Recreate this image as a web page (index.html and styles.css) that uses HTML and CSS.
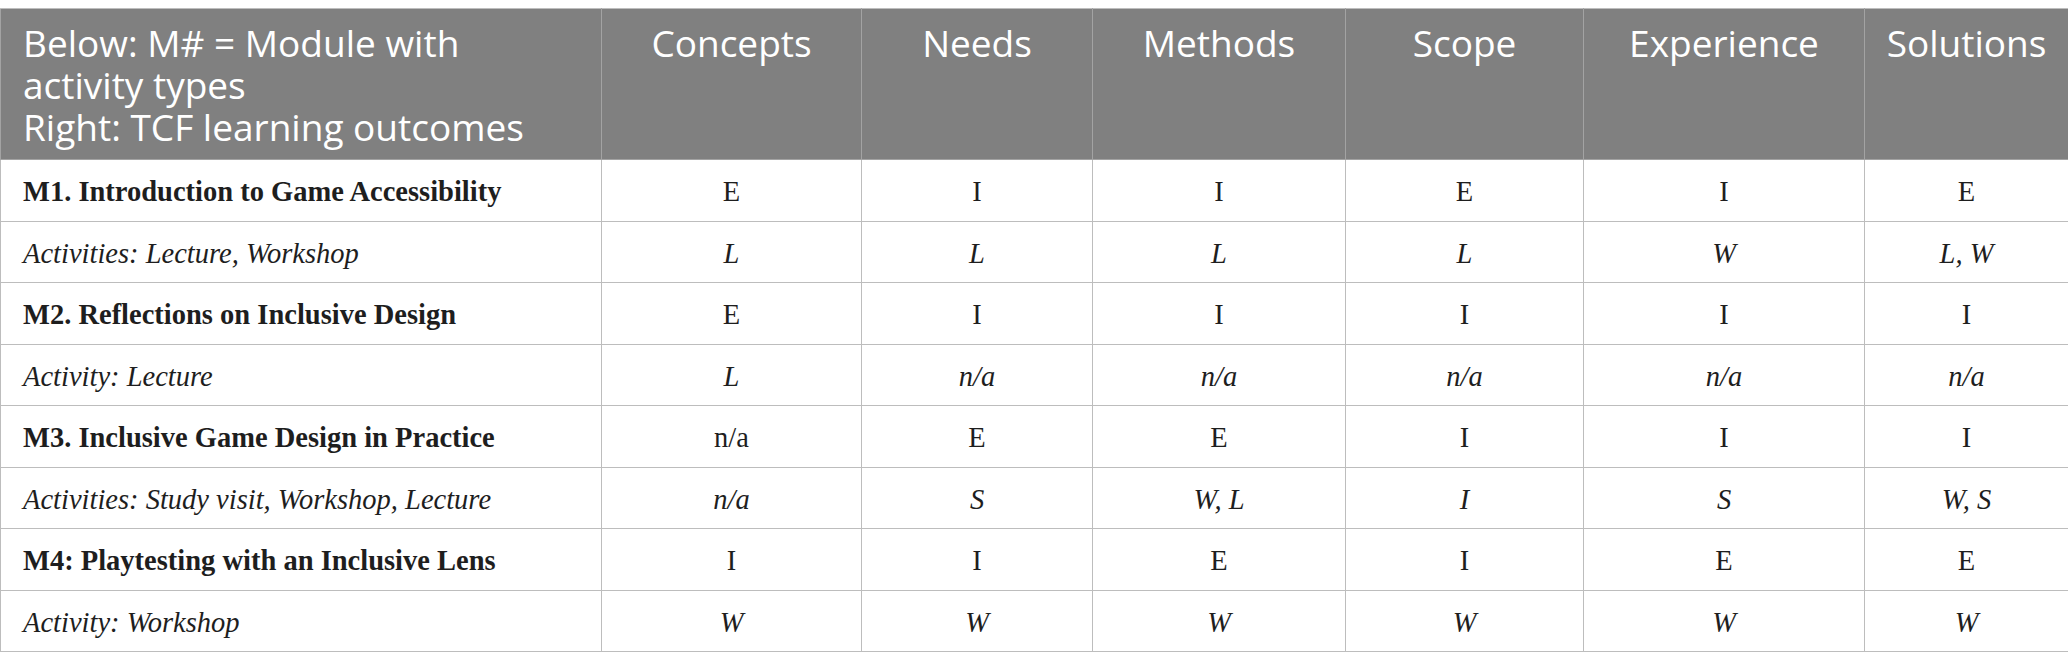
FILE: index.html
```html
<!DOCTYPE html>
<html lang="en">
<head>
<meta charset="utf-8">
<title>Modules and TCF learning outcomes</title>
<link rel="stylesheet" href="styles.css">
</head>
<body>
<table class="grid">
  <colgroup>
    <col class="c-first">
    <col class="c-concepts">
    <col class="c-needs">
    <col class="c-methods">
    <col class="c-scope">
    <col class="c-exp">
    <col class="c-sol">
  </colgroup>
  <thead>
    <tr class="head">
      <th class="h-first">Below: M# = Module with<br>activity types<br>Right: TCF learning outcomes</th>
      <th>Concepts</th>
      <th>Needs</th>
      <th>Methods</th>
      <th>Scope</th>
      <th>Experience</th>
      <th>Solutions</th>
    </tr>
  </thead>
  <tbody>
    <tr class="mod">
      <td class="label">M1. Introduction to Game Accessibility</td>
      <td>E</td><td>I</td><td>I</td><td>E</td><td>I</td><td>E</td>
    </tr>
    <tr class="act">
      <td class="label">Activities: Lecture, Workshop</td>
      <td>L</td><td>L</td><td>L</td><td>L</td><td>W</td><td>L, W</td>
    </tr>
    <tr class="mod">
      <td class="label">M2. Reflections on Inclusive Design</td>
      <td>E</td><td>I</td><td>I</td><td>I</td><td>I</td><td>I</td>
    </tr>
    <tr class="act">
      <td class="label">Activity: Lecture</td>
      <td>L</td><td>n/a</td><td>n/a</td><td>n/a</td><td>n/a</td><td>n/a</td>
    </tr>
    <tr class="mod">
      <td class="label">M3. Inclusive Game Design in Practice</td>
      <td>n/a</td><td>E</td><td>E</td><td>I</td><td>I</td><td>I</td>
    </tr>
    <tr class="act">
      <td class="label">Activities: Study visit, Workshop, Lecture</td>
      <td>n/a</td><td>S</td><td>W, L</td><td>I</td><td>S</td><td>W, S</td>
    </tr>
    <tr class="mod">
      <td class="label">M4: Playtesting with an Inclusive Lens</td>
      <td>I</td><td>I</td><td>E</td><td>I</td><td>E</td><td>E</td>
    </tr>
    <tr class="act">
      <td class="label">Activity: Workshop</td>
      <td>W</td><td>W</td><td>W</td><td>W</td><td>W</td><td>W</td>
    </tr>
  </tbody>
</table>
</body>
</html>
```

FILE: styles.css
```css
html, body {
  margin: 0;
  padding: 0;
  background: #ffffff;
}

body {
  padding-top: 8px;
}

.grid {
  width: 2068px;
  border-collapse: collapse;
  table-layout: fixed;
  font-family: "Liberation Serif", "Times New Roman", serif;
  font-size: 28.5px;
  color: #1e1e1e;
}

.c-first { width: 601px; }
.c-concepts { width: 260px; }
.c-needs { width: 231px; }
.c-methods { width: 253px; }
.c-scope { width: 238px; }
.c-exp { width: 281px; }
.c-sol { width: 204px; }

.grid th,
.grid td {
  border: 1px solid #bdbdbd;
}

.head th {
  height: 151px;
  box-sizing: border-box;
  background: #808080;
  color: #ffffff;
  font-family: "Open Sans", "Noto Sans", sans-serif;
  font-weight: 400;
  font-size: 37px;
  line-height: 42px;
  vertical-align: top;
  text-align: center;
  padding: 13px 6px 0;
  border-color: #a3a3a3;
  border-top-color: #bdbdbd;
}

.head .h-first {
  text-align: left;
  padding-left: 22px;
}

.grid td {
  height: 61.5px;
  box-sizing: border-box;
  text-align: center;
  vertical-align: middle;
  padding: 4px 6px 0;
  line-height: 32px;
}

.grid td.label {
  text-align: left;
  padding-left: 22px;
}

.mod td.label {
  font-weight: 700;
}

.act td {
  font-style: italic;
}
```
